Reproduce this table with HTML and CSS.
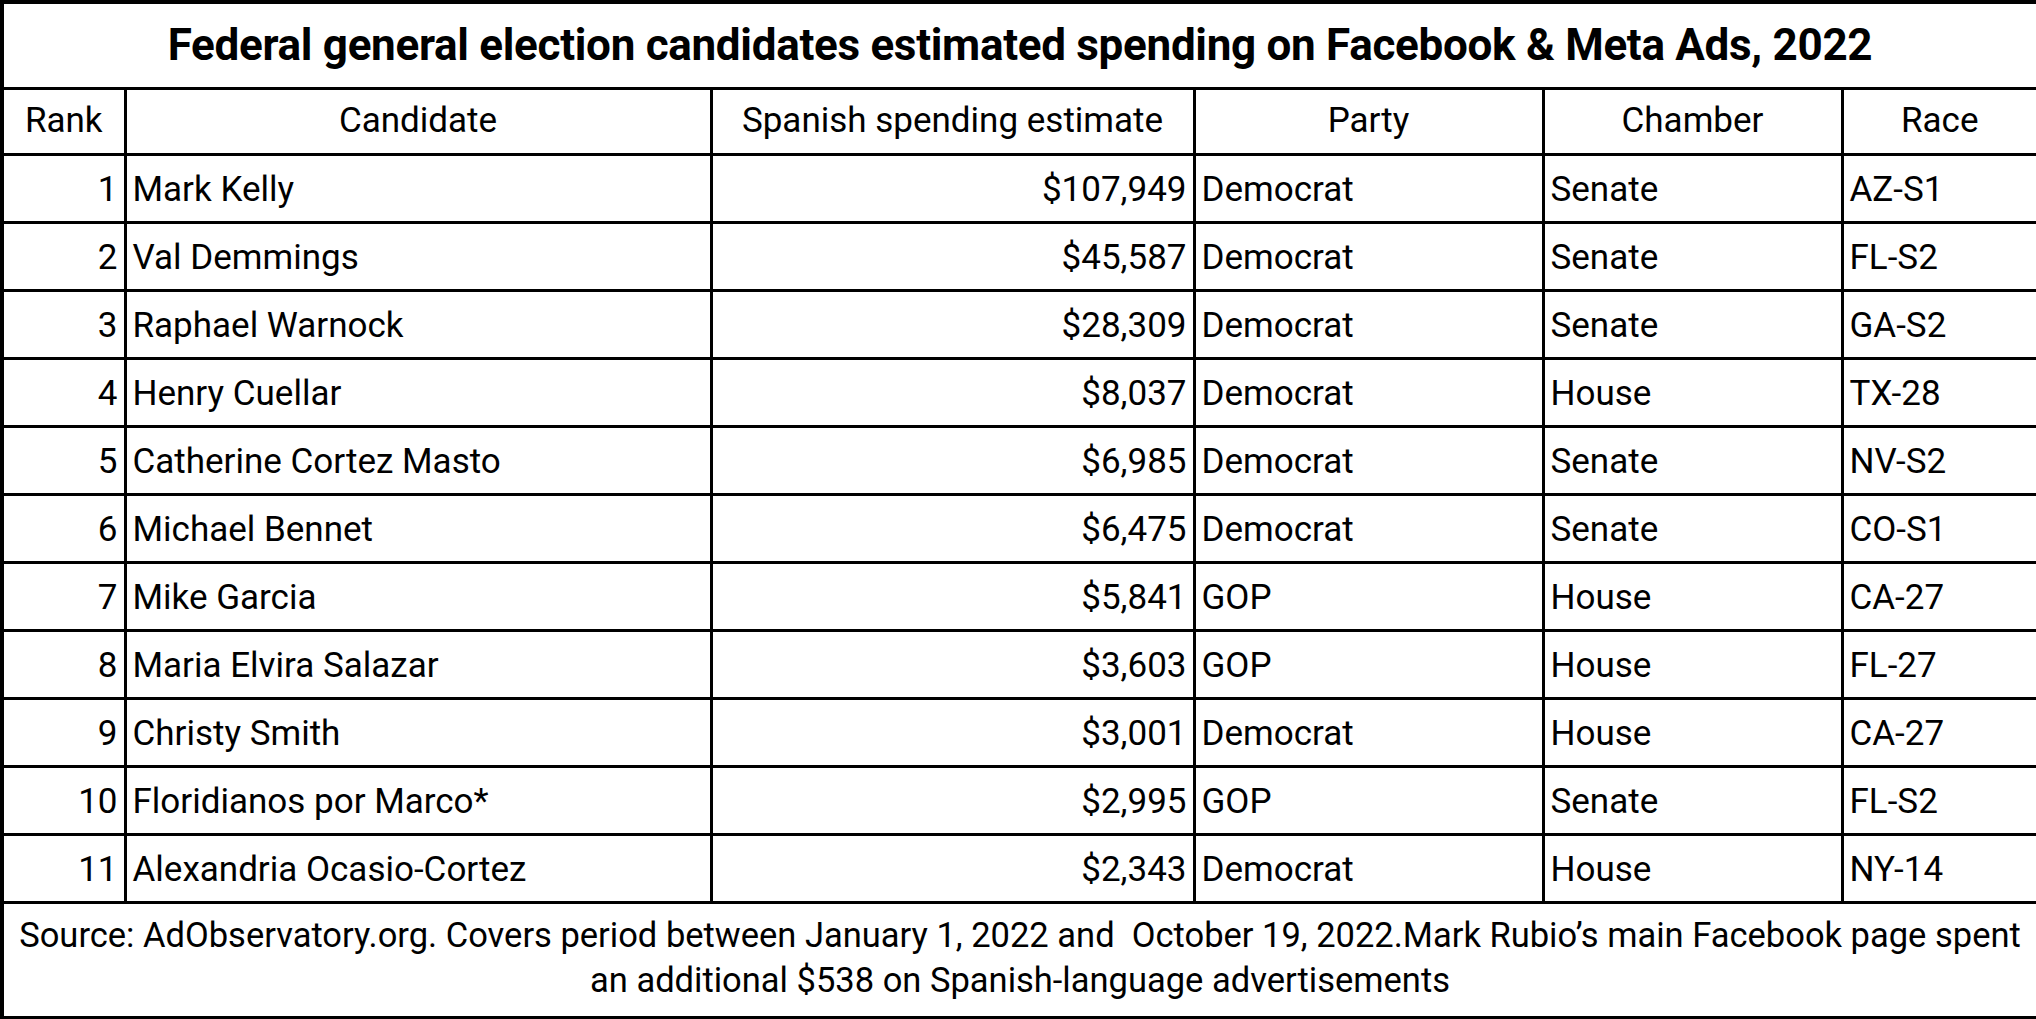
FILE: index.html
```html
<!DOCTYPE html>
<html lang="en">
<head>
<meta charset="utf-8">
<title>Federal general election candidates estimated spending</title>
<link rel="stylesheet" href="styles.css">
</head>
<body>
<table class="sheet">
  <colgroup>
    <col class="c-rank">
    <col class="c-cand">
    <col class="c-spend">
    <col class="c-party">
    <col class="c-chamber">
    <col class="c-race">
  </colgroup>
  <thead>
    <tr class="title-row"><th colspan="6" class="title">Federal general election candidates estimated spending on Facebook &amp; Meta Ads, 2022</th></tr>
    <tr class="head-row">
      <th>Rank</th><th>Candidate</th><th>Spanish spending estimate</th><th>Party</th><th>Chamber</th><th>Race</th>
    </tr>
  </thead>
  <tbody>
    <tr><td class="num">1</td><td>Mark Kelly</td><td class="num">$107,949</td><td>Democrat</td><td>Senate</td><td>AZ-S1</td></tr>
    <tr><td class="num">2</td><td>Val Demmings</td><td class="num">$45,587</td><td>Democrat</td><td>Senate</td><td>FL-S2</td></tr>
    <tr><td class="num">3</td><td>Raphael Warnock</td><td class="num">$28,309</td><td>Democrat</td><td>Senate</td><td>GA-S2</td></tr>
    <tr><td class="num">4</td><td>Henry Cuellar</td><td class="num">$8,037</td><td>Democrat</td><td>House</td><td>TX-28</td></tr>
    <tr><td class="num">5</td><td>Catherine Cortez Masto</td><td class="num">$6,985</td><td>Democrat</td><td>Senate</td><td>NV-S2</td></tr>
    <tr><td class="num">6</td><td>Michael Bennet</td><td class="num">$6,475</td><td>Democrat</td><td>Senate</td><td>CO-S1</td></tr>
    <tr><td class="num">7</td><td>Mike Garcia</td><td class="num">$5,841</td><td>GOP</td><td>House</td><td>CA-27</td></tr>
    <tr><td class="num">8</td><td>Maria Elvira Salazar</td><td class="num">$3,603</td><td>GOP</td><td>House</td><td>FL-27</td></tr>
    <tr><td class="num">9</td><td>Christy Smith</td><td class="num">$3,001</td><td>Democrat</td><td>House</td><td>CA-27</td></tr>
    <tr><td class="num">10</td><td>Floridianos por Marco*</td><td class="num">$2,995</td><td>GOP</td><td>Senate</td><td>FL-S2</td></tr>
    <tr><td class="num">11</td><td>Alexandria Ocasio-Cortez</td><td class="num">$2,343</td><td>Democrat</td><td>House</td><td>NY-14</td></tr>
  </tbody>
  <tfoot>
    <tr class="foot-row"><td colspan="6" class="foot">Source: AdObservatory.org. Covers period between January 1, 2022 and&nbsp; October 19, 2022.Mark Rubio’s main Facebook page spent<br>an additional $538 on Spanish-language advertisements</td></tr>
  </tfoot>
</table>
</body>
</html>
```

FILE: styles.css
```css
html, body {
  margin: 0;
  padding: 0;
  background: #ffffff;
}

body {
  font-family: Roboto, "Liberation Sans", sans-serif;
  color: #000000;
}

.sheet {
  width: 2036px;
  table-layout: fixed;
  border-collapse: collapse;
  border: 4px solid #000;
}

.c-rank { width: 123px; }
.c-cand { width: 586px; }
.c-spend { width: 483px; }
.c-party { width: 349px; }
.c-chamber { width: 299px; }
.c-race { width: 196px; }

.sheet th,
.sheet td {
  border: 3px solid #000;
  padding: 0 6px;
  font-size: 35px;
  font-weight: 400;
  line-height: 40px;
  white-space: nowrap;
  overflow: hidden;
  box-sizing: border-box;
}

.sheet td {
  text-align: left;
  height: 68px;
  padding-top: 3px;
}

.sheet td.num {
  text-align: right;
}

.title-row .title {
  height: 86px;
  font-size: 44px;
  font-weight: 700;
  text-align: center;
  letter-spacing: -0.3px;
}

.head-row th {
  height: 66px;
  text-align: center;
}

.foot-row .foot {
  height: 116px;
  white-space: nowrap;
  text-align: center;
  font-size: 34.5px;
  line-height: 45px;
  padding: 0 0 4px;
}
```
